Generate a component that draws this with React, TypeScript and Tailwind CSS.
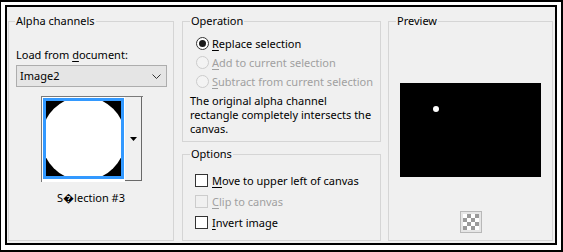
import React from "react";

function U({ children }: { children: React.ReactNode }) {
  return <span className="underline underline-offset-[2px]">{children}</span>;
}

function Radio({ checked, disabled, children }: { checked?: boolean; disabled?: boolean; children: React.ReactNode }) {
  return (
    <div className={"h-[19px] flex items-center ml-[13px] whitespace-nowrap " + (disabled ? "text-[#a0a0a0]" : "text-black")}>
      <span
        className={
          "w-[13px] h-[13px] rounded-full border flex items-center justify-center shrink-0 " +
          (disabled ? "border-[#cccccc] bg-[#f3f3f3]" : "border-[#333333] bg-white")
        }
      >
        {checked && <span className="w-[7px] h-[7px] rounded-full bg-[#1a1a1a]" />}
      </span>
      <span className="ml-[3px]">{children}</span>
    </div>
  );
}

function Check({ disabled, children }: { disabled?: boolean; children: React.ReactNode }) {
  return (
    <div className={"h-[21px] flex items-center ml-[12px] whitespace-nowrap " + (disabled ? "text-[#a0a0a0]" : "text-black")}>
      <span
        className={
          "w-[13px] h-[13px] border shrink-0 " +
          (disabled ? "border-[#cccccc] bg-[#f0f0f0]" : "border-[#333333] bg-white")
        }
      />
      <span className="ml-[4px]">{children}</span>
    </div>
  );
}

export default function App() {
  return (
    <div className="w-[563px] h-[252px] bg-white border-black border-t-2 border-l border-r-2 border-b-2 pl-1 pt-[3px] pr-1 pb-[5px] font-['Noto_Sans','DejaVu_Sans',sans-serif] text-[11px] leading-4 text-black">
      <div className="w-[552px] h-[240px] border-2 border-black bg-[#f0f0f0] flex items-start">
        {/* Alpha channels */}
        <div className="ml-[1px] mt-[14px] w-[166px] h-[220px] border border-[#d5d5d5] flex flex-col">
          <div className="-mt-[9px] ml-[6px] px-[1px] self-start bg-[#f0f0f0] h-4 leading-4 whitespace-nowrap">Alpha channels</div>
          <div className="mt-[18px] ml-[7px] h-4 whitespace-nowrap">
            Load from <U>d</U>ocument:
          </div>
          <div className="mt-[2px] ml-[7px] w-[151px] h-[22px] border border-[#adadad] bg-[#e5e5e5] flex items-center justify-between pl-[3px] pr-[5px]">
            <span>Image2</span>
            <svg width="9" height="5" viewBox="0 0 9 5">
              <path d="M0.5 0.5 L4.5 4.5 L8.5 0.5" fill="none" stroke="#333" strokeWidth="1" />
            </svg>
          </div>
          <div className="mt-[9px] ml-[32px] w-[102px] h-[86px] border-t border-l border-[#7a7a7a] flex">
            <div className="bg-white p-[1px] h-[85px]">
              <div className="w-[81px] h-[81px] border-[3px] border-[#3399ff] bg-black">
                <svg width="75" height="75" viewBox="0 0 75 75" className="block">
                  <rect width="75" height="75" fill="#000" />
                  <circle cx="37.5" cy="37.5" r="42" fill="#fff" />
                </svg>
              </div>
            </div>
            <div className="w-[17px] h-[84px] bg-[#f0f0f0] border-r border-b border-[#696969] flex items-center justify-center">
              <svg width="7" height="4" viewBox="0 0 7 4">
                <path d="M0 0 H7 L3.5 4 Z" fill="#000" />
              </svg>
            </div>
          </div>
          <div className="mt-[8px] text-center h-4 whitespace-nowrap">S{"\uFFFD"}lection #3</div>
        </div>

        {/* Operation / Options */}
        <div className="ml-[8px] mt-[14px] w-[199px] flex flex-col">
          <div className="h-[121px] border border-[#d5d5d5] flex flex-col">
            <div className="-mt-[9px] ml-[7px] px-[1px] self-start bg-[#f0f0f0] h-4 leading-4">Operation</div>
            <div className="mt-[5px]">
              <Radio checked>
                <U>R</U>eplace selection
              </Radio>
              <Radio disabled>
                <U>A</U>dd to current selection
              </Radio>
              <Radio disabled>
                <U>S</U>ubtract from current selection
              </Radio>
            </div>
            <div className="mt-[3px] ml-[7px] leading-[14px] whitespace-nowrap">
              <div>The original alpha channel</div>
              <div>rectangle completely intersects the</div>
              <div>canvas.</div>
            </div>
          </div>
          <div className="mt-[12px] h-[87px] border border-[#d5d5d5] flex flex-col">
            <div className="-mt-[9px] ml-[7px] px-[1px] self-start bg-[#f0f0f0] h-4 leading-4">Options</div>
            <div className="mt-[8px]">
              <Check>
                <U>M</U>ove to upper left of canvas
              </Check>
              <Check disabled>
                <U>C</U>lip to canvas
              </Check>
              <Check>
                <U>I</U>nvert image
              </Check>
            </div>
          </div>
        </div>

        {/* Preview */}
        <div className="ml-[7px] mt-[14px] w-[165px] h-[220px] border border-[#d5d5d5] flex flex-col">
          <div className="-mt-[9px] ml-[7px] px-[1px] self-start bg-[#f0f0f0] h-4 leading-4">Preview</div>
          <div className="mt-[54px] ml-[11px] w-[141px] h-[94px] bg-black">
            <svg width="141" height="94" viewBox="0 0 141 94" className="block">
              <circle cx="36" cy="26" r="3" fill="#fff" />
            </svg>
          </div>
          <div className="mt-[34px] ml-[71px] w-[22px] h-[22px] border border-[#b8b8b8] bg-[#e6e6e6] flex items-center justify-center">
            <svg width="16" height="16" viewBox="0 0 16 16" className="block">
              <rect width="16" height="16" fill="#ffffff" />
              <rect x="4" y="0" width="4" height="4" fill="#9a9a9a" />
              <rect x="12" y="0" width="4" height="4" fill="#9a9a9a" />
              <rect x="0" y="4" width="4" height="4" fill="#9a9a9a" />
              <rect x="8" y="4" width="4" height="4" fill="#9a9a9a" />
              <rect x="4" y="8" width="4" height="4" fill="#9a9a9a" />
              <rect x="12" y="8" width="4" height="4" fill="#9a9a9a" />
              <rect x="0" y="12" width="4" height="4" fill="#9a9a9a" />
              <rect x="8" y="12" width="4" height="4" fill="#9a9a9a" />
            </svg>
          </div>
        </div>
      </div>
    </div>
  );
}
